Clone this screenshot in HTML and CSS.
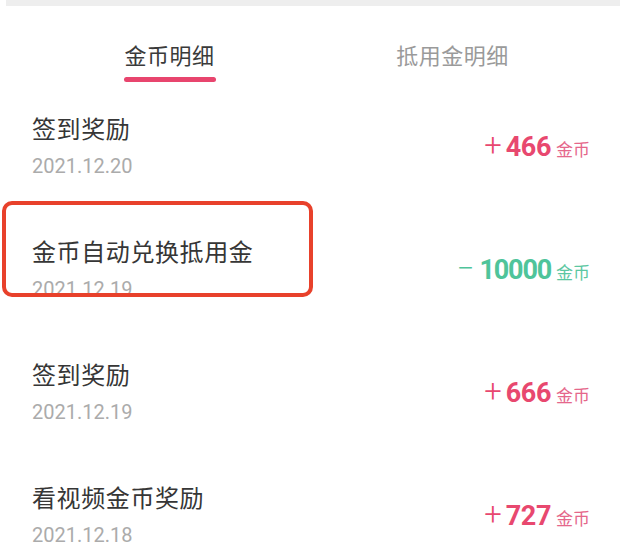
FILE: index.html
```html
<!DOCTYPE html>
<html lang="zh-CN">
<head>
<meta charset="utf-8">
<title>金币明细</title>
<link rel="stylesheet" href="styles.css">
</head>
<body>
<div class="page">
  <div class="topbar"></div>
  <div class="tabs">
    <div class="tab active">
      <span class="tab-label">金币明细</span>
      <span class="tab-line"></span>
    </div>
    <div class="tab">
      <span class="tab-label">抵用金明细</span>
    </div>
  </div>
  <div class="list">
    <div class="row">
      <div class="info">
        <div class="title">签到奖励</div>
        <div class="date">2021.12.20</div>
      </div>
      <div class="amount plus"><span class="sign">+</span><span class="num">466</span><span class="unit">金币</span></div>
    </div>
    <div class="row highlighted">
      <div class="info">
        <div class="title">金币自动兑换抵用金</div>
        <div class="date">2021.12.19</div>
      </div>
      <div class="amount minus"><span class="sign">−</span><span class="num">10000</span><span class="unit">金币</span></div>
      <div class="mark"></div>
    </div>
    <div class="row">
      <div class="info">
        <div class="title">签到奖励</div>
        <div class="date">2021.12.19</div>
      </div>
      <div class="amount plus"><span class="sign">+</span><span class="num">666</span><span class="unit">金币</span></div>
    </div>
    <div class="row">
      <div class="info">
        <div class="title">看视频金币奖励</div>
        <div class="date">2021.12.18</div>
      </div>
      <div class="amount plus"><span class="sign">+</span><span class="num">727</span><span class="unit">金币</span></div>
    </div>
  </div>
</div>
</body>
</html>
```
FILE: styles.css
```css
html, body {
  margin: 0;
  padding: 0;
  background: #ffffff;
}
body {
  font-family: "Noto Sans CJK SC", "Noto Sans", sans-serif;
  overflow: hidden;
}
.page {
  width: 620px;
  height: 556px;
  overflow: hidden;
}
.topbar {
  height: 6px;
  margin-left: 6px;
  background: #eeeeee;
}
.tabs {
  display: grid;
  grid-template-columns: 1fr 1fr;
  padding: 33px 26px 0 28px;
}
.tab {
  display: flex;
  flex-direction: column;
  align-items: center;
}
.tab-label {
  font-size: 22px;
  line-height: 30px;
  letter-spacing: 0.5px;
  color: #9a9a9a;
}
.tab.active .tab-label {
  color: #3a3a3a;
}
.tab-line {
  display: block;
  width: 92px;
  height: 5px;
  margin-top: 8px;
  border-radius: 3px;
  background: #e8456e;
}
.list {
  display: flex;
  flex-direction: column;
  margin-top: 1px;
}
.row {
  position: relative;
  height: 123px;
  display: flex;
  align-items: center;
  justify-content: space-between;
  padding: 0 30px 0 32px;
}
.info {
  display: flex;
  flex-direction: column;
}
.title {
  font-size: 24px;
  line-height: 32px;
  letter-spacing: 0.6px;
  color: #363636;
}
.date {
  margin-top: 10px;
  font-family: Roboto, "Noto Sans", sans-serif;
  font-size: 20px;
  line-height: 24px;
  color: #ababab;
}
.amount {
  margin-top: 6px;
  display: flex;
  align-items: baseline;
  line-height: 30px;
  font-family: Roboto, "Noto Sans", sans-serif;
}
.sign {
  font-size: 31px;
  font-weight: 300;
  margin-right: 4px;
}
.minus .sign {
  margin-right: 5px;
}
.num {
  font-size: 27px;
  font-weight: 700;
  letter-spacing: -0.4px;
}
.minus .num {
  letter-spacing: -1.2px;
}
.unit {
  margin-left: 5px;
  font-family: "Noto Sans CJK SC", sans-serif;
  font-size: 17px;
}
.plus {
  color: #e8486f;
}
.plus .unit {
  color: #e5678b;
}
.minus {
  color: #4fc49a;
}
.minus .unit {
  color: #5cc7a2;
}
.mark {
  position: absolute;
  left: 2px;
  top: -5px;
  width: 303px;
  height: 88px;
  border: 4px solid #e8412b;
  border-radius: 10px;
  pointer-events: none;
}
```
